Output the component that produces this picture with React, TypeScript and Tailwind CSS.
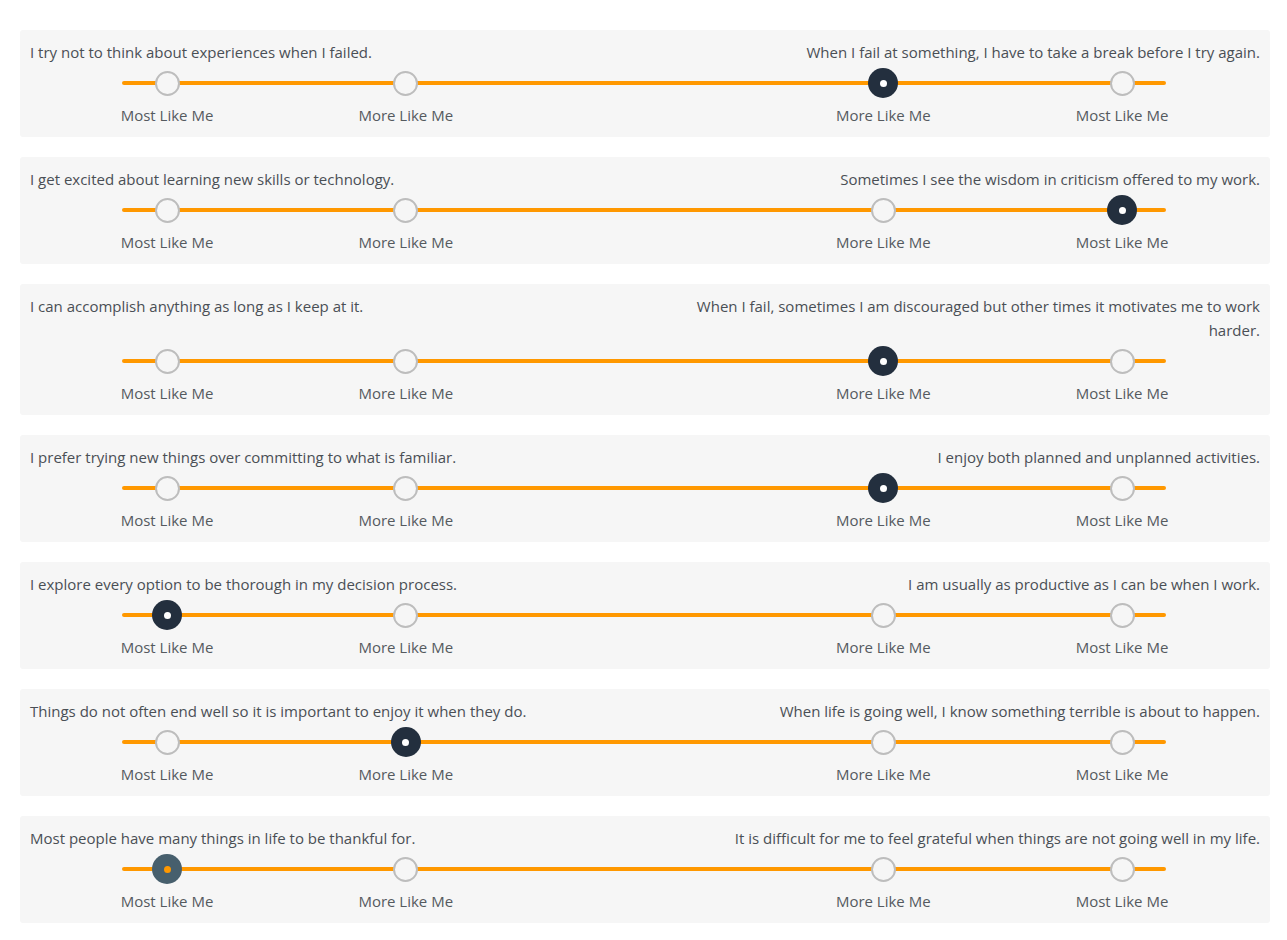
import React from "react";

type Row = { left: string; right: string; sel: number; hover?: boolean };

const rows: Row[] = [
  { left: "I try not to think about experiences when I failed.", right: "When I fail at something, I have to take a break before I try again.", sel: 3 },
  { left: "I get excited about learning new skills or technology.", right: "Sometimes I see the wisdom in criticism offered to my work.", sel: 4 },
  { left: "I can accomplish anything as long as I keep at it.", right: "When I fail, sometimes I am discouraged but other times it motivates me to work harder.", sel: 3 },
  { left: "I prefer trying new things over committing to what is familiar.", right: "I enjoy both planned and unplanned activities.", sel: 3 },
  { left: "I explore every option to be thorough in my decision process.", right: "I am usually as productive as I can be when I work.", sel: 0 },
  { left: "Things do not often end well so it is important to enjoy it when they do.", right: "When life is going well, I know something terrible is about to happen.", sel: 1 },
  { left: "Most people have many things in life to be thankful for.", right: "It is difficult for me to feel grateful when things are not going well in my life.", sel: 0, hover: true },
];

const labels = ["Most Like Me", "More Like Me", "", "More Like Me", "Most Like Me"];

function Dot({ selected, hover }: { selected: boolean; hover?: boolean }) {
  if (selected && hover) {
    return (
      <div className="w-[30px] h-[30px] rounded-full bg-[#475f6d] flex items-center justify-center">
        <div className="w-[7px] h-[7px] rounded-full bg-[#ff9800]" />
      </div>
    );
  }
  if (selected) {
    return (
      <div className="w-[30px] h-[30px] rounded-full bg-[#232f3e] flex items-center justify-center">
        <div className="w-[7px] h-[7px] rounded-full bg-white" />
      </div>
    );
  }
  return <div className="w-[25px] h-[25px] rounded-full border-2 border-[#bdbdbd] bg-[#f6f6f6]" />;
}

export default function App() {
  return (
    <div
      className="min-h-[940px] bg-white pl-5 pr-[17px] pt-[30px] pb-5 flex flex-col gap-5 text-[15px] text-[#4a4f55]"
      style={{ fontFamily: '"Open Sans", "Noto Sans", sans-serif' }}
    >
      {rows.map((r, i) => (
        <div key={i} className="rounded-[3px] bg-[#f6f6f6] px-[10px] pt-[10px] pb-[10px]">
          <div className="grid grid-cols-2 leading-6">
            <div>{r.left}</div>
            <div className="text-right">{r.right}</div>
          </div>
          <div className="relative ml-[77px] w-[1075px] mt-1">
            <div className="absolute left-[15px] right-[16px] top-[13px] h-1 rounded-full bg-[#ff9800]" />
            <div className="relative flex justify-between">
              {labels.map((l, j) => (
                <div key={j} className="w-[120px] flex flex-col items-center">
                  <div className="h-[30px] flex items-center justify-center">
                    {j !== 2 && <Dot selected={r.sel === j} hover={r.hover} />}
                  </div>
                  <div className="mt-[5px] leading-6 text-[#555a5f] whitespace-nowrap">{l || "\u00a0"}</div>
                </div>
              ))}
            </div>
          </div>
        </div>
      ))}
    </div>
  );
}
